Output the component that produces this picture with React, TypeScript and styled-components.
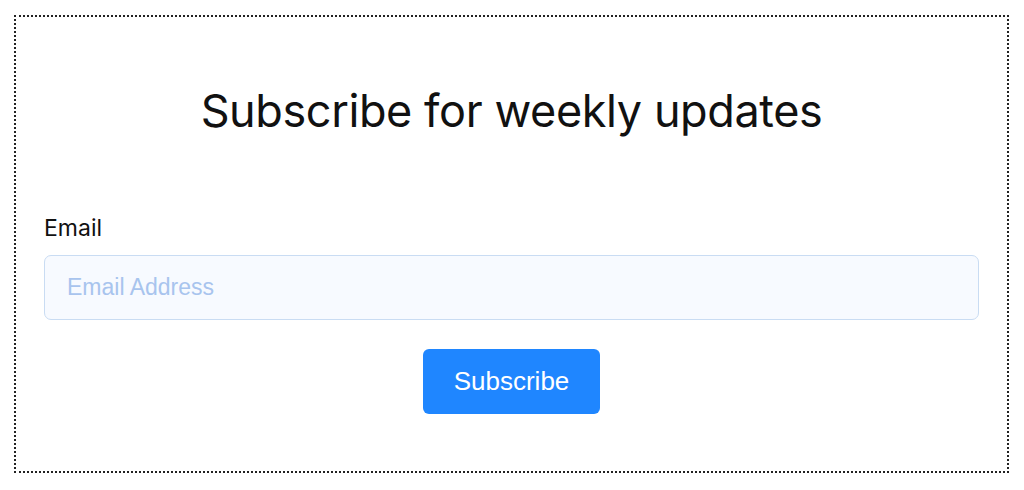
import React from 'react';
import styled, { createGlobalStyle } from 'styled-components';

const GlobalStyle = createGlobalStyle`
    html, body {
        margin: 0;
        padding: 0;
        background: #ffffff;
    }
`;

const App: React.FC = () => {
    return (
        <>
            <GlobalStyle />
            <Frame>
                <Title>Subscribe for weekly updates</Title>
                <Form onSubmit={e => e.preventDefault()}>
                    <Label htmlFor="email">Email</Label>
                    <Input id="email" type="email" placeholder="Email Address" />
                    <ButtonRow>
                        <Button type="submit">Subscribe</Button>
                    </ButtonRow>
                </Form>
            </Frame>
        </>
    );
};

const Frame = styled.div`
    margin: 15px 15px 0 14px;
    height: 458px;
    box-sizing: border-box;
    border: 2px dotted #222;
    padding: 0 28px 0 28px;
    display: flex;
    flex-direction: column;
`;

const Title = styled.h1`
    margin: 66px 0 0;
    text-align: center;
    font-family: Inter, 'Noto Sans', sans-serif;
    font-weight: 400;
    font-size: 45px;
    line-height: 56px;
    color: #111;
    letter-spacing: -0.4px;
`;

const Form = styled.form`
    display: flex;
    flex-direction: column;
    margin-top: 74px;
`;

const Label = styled.label`
    font-family: Inter, 'Noto Sans', sans-serif;
    font-size: 23px;
    line-height: 30px;
    color: #111;
`;

const Input = styled.input`
    margin-top: 12px;
    height: 65px;
    box-sizing: border-box;
    border: 1px solid #c9dcf3;
    border-radius: 7px;
    background: #f7faff;
    padding: 0 22px;
    font-family: 'Liberation Sans', Arial, sans-serif;
    font-size: 23px;
    color: #222;
    outline: none;

    &::placeholder {
        color: #a8c4ee;
    }
`;

const ButtonRow = styled.div`
    display: flex;
    justify-content: center;
    margin-top: 29px;
`;

const Button = styled.button`
    width: 177px;
    height: 65px;
    border: none;
    border-radius: 6px;
    background: #1f86ff;
    color: #fff;
    font-family: 'Liberation Sans', Arial, sans-serif;
    font-size: 26px;
    cursor: pointer;
`;

export default App;
